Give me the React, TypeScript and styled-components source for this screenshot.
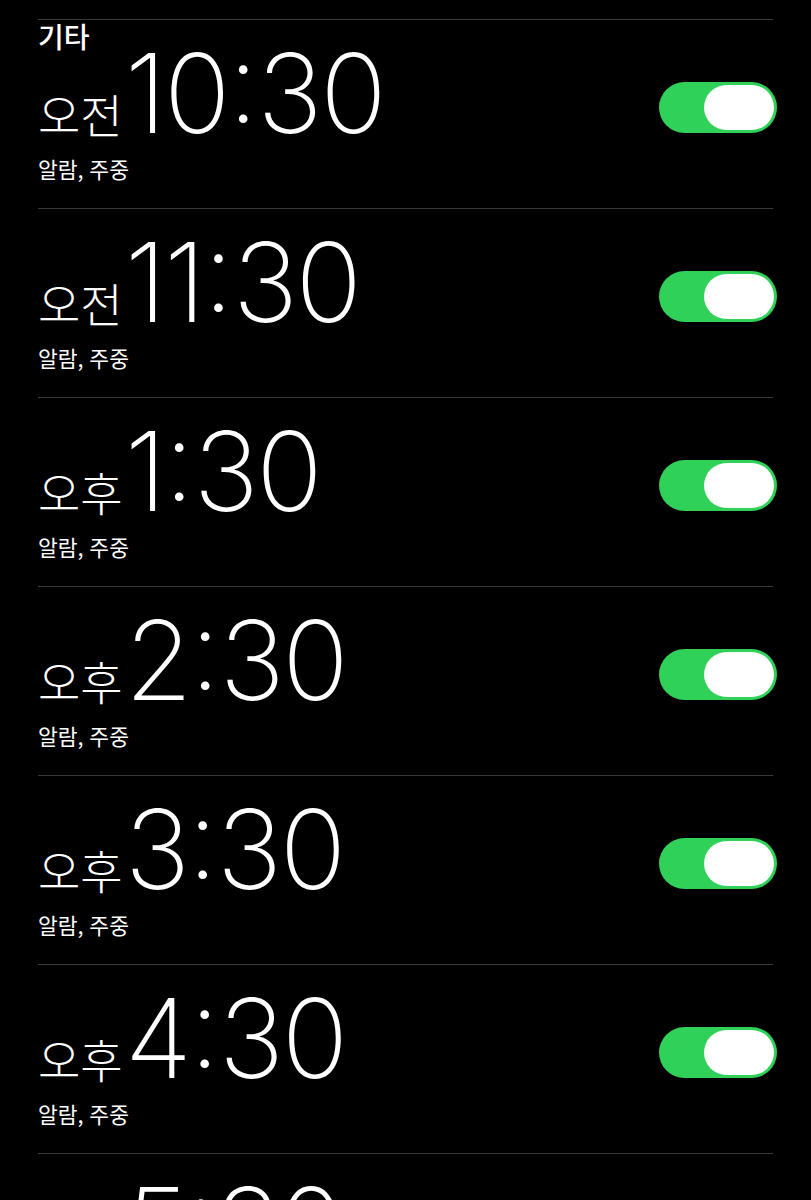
import React from "react";
import styled, { createGlobalStyle } from "styled-components";

const Global = createGlobalStyle`
  html, body { margin: 0; padding: 0; background: #000; }
  body { font-family: "Noto Sans CJK KR", "Noto Sans", sans-serif; color: #fff; }
`;

const Page = styled.div`
  background: #000;
  height: 1200px;
  padding: 19px 38px 0;
  box-sizing: border-box;
  overflow: hidden;
`;

const List = styled.div`
  position: relative;
  display: flex;
  flex-direction: column;
`;

const SectionHeader = styled.div`
  position: absolute;
  top: 3px;
  left: 0;
  font-family: "Noto Sans CJK KR", sans-serif;
  font-size: 28px;
  line-height: 28px;
  font-weight: 500;
  color: #fff;
  z-index: 1;
`;

const Row = styled.div`
  height: 189px;
  flex-shrink: 0;
  box-sizing: border-box;
  border-top: 1px solid #3a3a3c;
  display: flex;
  justify-content: space-between;
  align-items: flex-start;
`;

const Info = styled.div`
  display: flex;
  flex-direction: column;
  padding-top: 18px;
`;

const TimeLine = styled.div`
  display: flex;
  align-items: baseline;
  height: 110px;
`;

const AmPm = styled.span`
  font-family: "Noto Sans CJK KR", sans-serif;
  font-size: 46px;
  line-height: 46px;
  font-weight: 300;
  margin-right: 2px;
`;

const Time = styled.span`
  font-family: "Inter", "Liberation Sans", sans-serif;
  font-size: 110px;
  line-height: 110px;
  font-weight: 200;
  letter-spacing: -2.5px;
`;

const Colon = styled.span`
  line-height: 0;
  vertical-align: 11px;
  letter-spacing: -1px;
`;

const Sub = styled.div`
  font-family: "Noto Sans CJK KR", sans-serif;
  font-size: 21.5px;
  line-height: 26px;
  font-weight: 400;
  margin-top: 8px;
  word-spacing: 1px;
`;

const Toggle = styled.div<{ $on: boolean }>`
  width: 118px;
  height: 51px;
  box-sizing: border-box;
  margin-top: 62px;
  margin-right: -4px;
  border-radius: 26px;
  padding: 3px;
  background: ${(p) => (p.$on ? "#30d158" : "#39393d")};
  display: flex;
  justify-content: ${(p) => (p.$on ? "flex-end" : "flex-start")};
`;

const Knob = styled.div`
  width: 70px;
  height: 45px;
  border-radius: 23px;
  background: #fff;
`;

const alarms = [
  { ampm: "오전", h: "10", m: "30" },
  { ampm: "오전", h: "11", m: "30" },
  { ampm: "오후", h: "1", m: "30" },
  { ampm: "오후", h: "2", m: "30" },
  { ampm: "오후", h: "3", m: "30" },
  { ampm: "오후", h: "4", m: "30" },
  { ampm: "오후", h: "5", m: "30" },
];

export default function App() {
  return (
    <>
      <Global />
      <Page>
        <List>
          <SectionHeader>기타</SectionHeader>
          {alarms.map((a) => (
            <Row key={a.h}>
              <Info>
                <TimeLine>
                  <AmPm>{a.ampm}</AmPm>
                  <Time>
                    {a.h}
                    <Colon>:</Colon>
                    {a.m}
                  </Time>
                </TimeLine>
                <Sub>알람, 주중</Sub>
              </Info>
              <Toggle $on>
                <Knob />
              </Toggle>
            </Row>
          ))}
        </List>
      </Page>
    </>
  );
}
